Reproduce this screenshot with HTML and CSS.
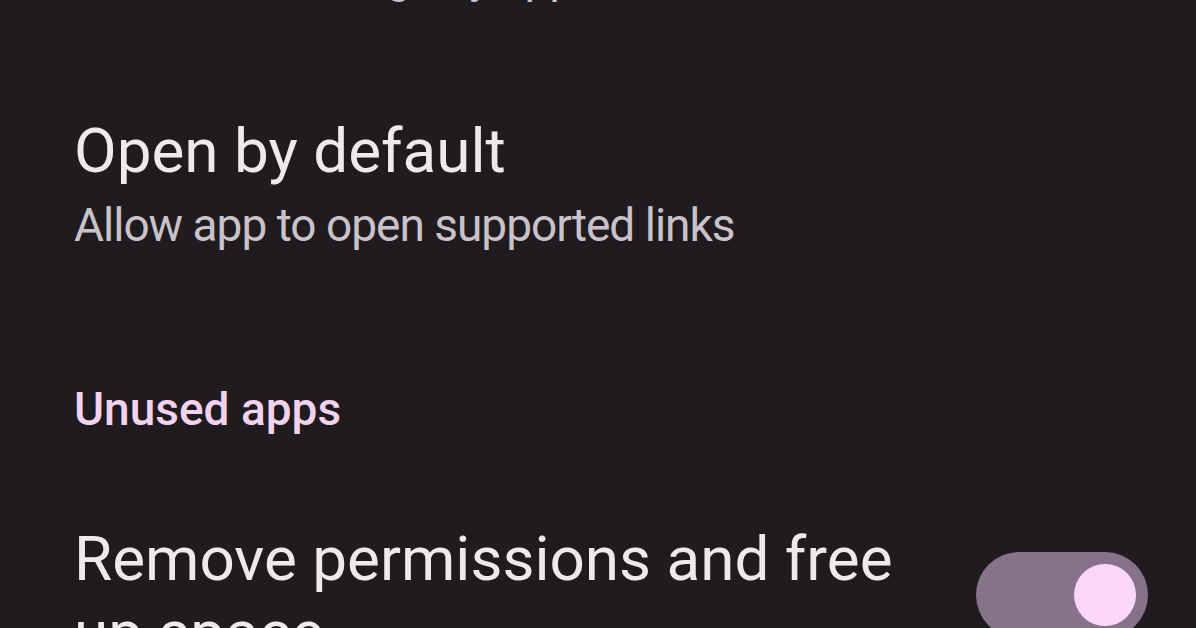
FILE: index.html
```html
<!DOCTYPE html>
<html lang="en">
<head>
<meta charset="utf-8">
<title>App info</title>
<link rel="stylesheet" href="styles.css">
</head>
<body>
<main class="screen">
  <div class="prev">
    <p class="summary">Mobile data usage by app</p>
  </div>
  <section class="item">
    <h2 class="title">Open by default</h2>
    <p class="summary">Allow app to open supported links</p>
  </section>
  <h3 class="section-head">Unused apps</h3>
  <section class="item item-switch">
    <div class="item-text">
      <h2 class="title title-wrap">Remove permissions and free up space</h2>
    </div>
    <div class="switch" role="switch" aria-checked="true">
      <span class="thumb"></span>
    </div>
  </section>
</main>
</body>
</html>
```
FILE: styles.css
```css
html, body {
  margin: 0;
  padding: 0;
  background: #1f1b1f;
  height: 100%;
  overflow: hidden;
}
.screen {
  padding: 0 48px 0 74px;
  font-family: Roboto, "Noto Sans", sans-serif;
}
.prev {
  margin-top: -53px;
}
.summary {
  margin: 0;
  font-size: 46px;
  line-height: 60px;
  letter-spacing: -1px;
  color: #c9c3c9;
  white-space: nowrap;
}
.item {
  margin: 0;
}
.prev + .item {
  margin-top: 109px;
}
.title {
  margin: 0;
  font-size: 62px;
  line-height: 70px;
  font-weight: 400;
  color: #eee9ec;
  white-space: nowrap;
}
.title + .summary {
  margin-top: 9px;
}
.section-head {
  margin: 124px 0 0;
  font-size: 46px;
  line-height: 60px;
  font-weight: 500;
  color: #f1d2ef;
}
.item-switch {
  margin-top: 83px;
  display: flex;
  align-items: flex-start;
  gap: 40px;
}
.item-text {
  flex: 1;
  min-width: 0;
}
.title-wrap {
  white-space: normal;
  line-height: 74px;
  max-width: 840px;
}
.switch {
  margin-top: 30px;
  width: 172px;
  height: 86px;
  border-radius: 43px;
  background: #87718b;
  display: flex;
  align-items: center;
  justify-content: flex-end;
  padding-right: 12px;
  box-sizing: border-box;
  flex-shrink: 0;
}
.thumb {
  width: 62px;
  height: 62px;
  border-radius: 50%;
  background: #fbd8f9;
}
```
